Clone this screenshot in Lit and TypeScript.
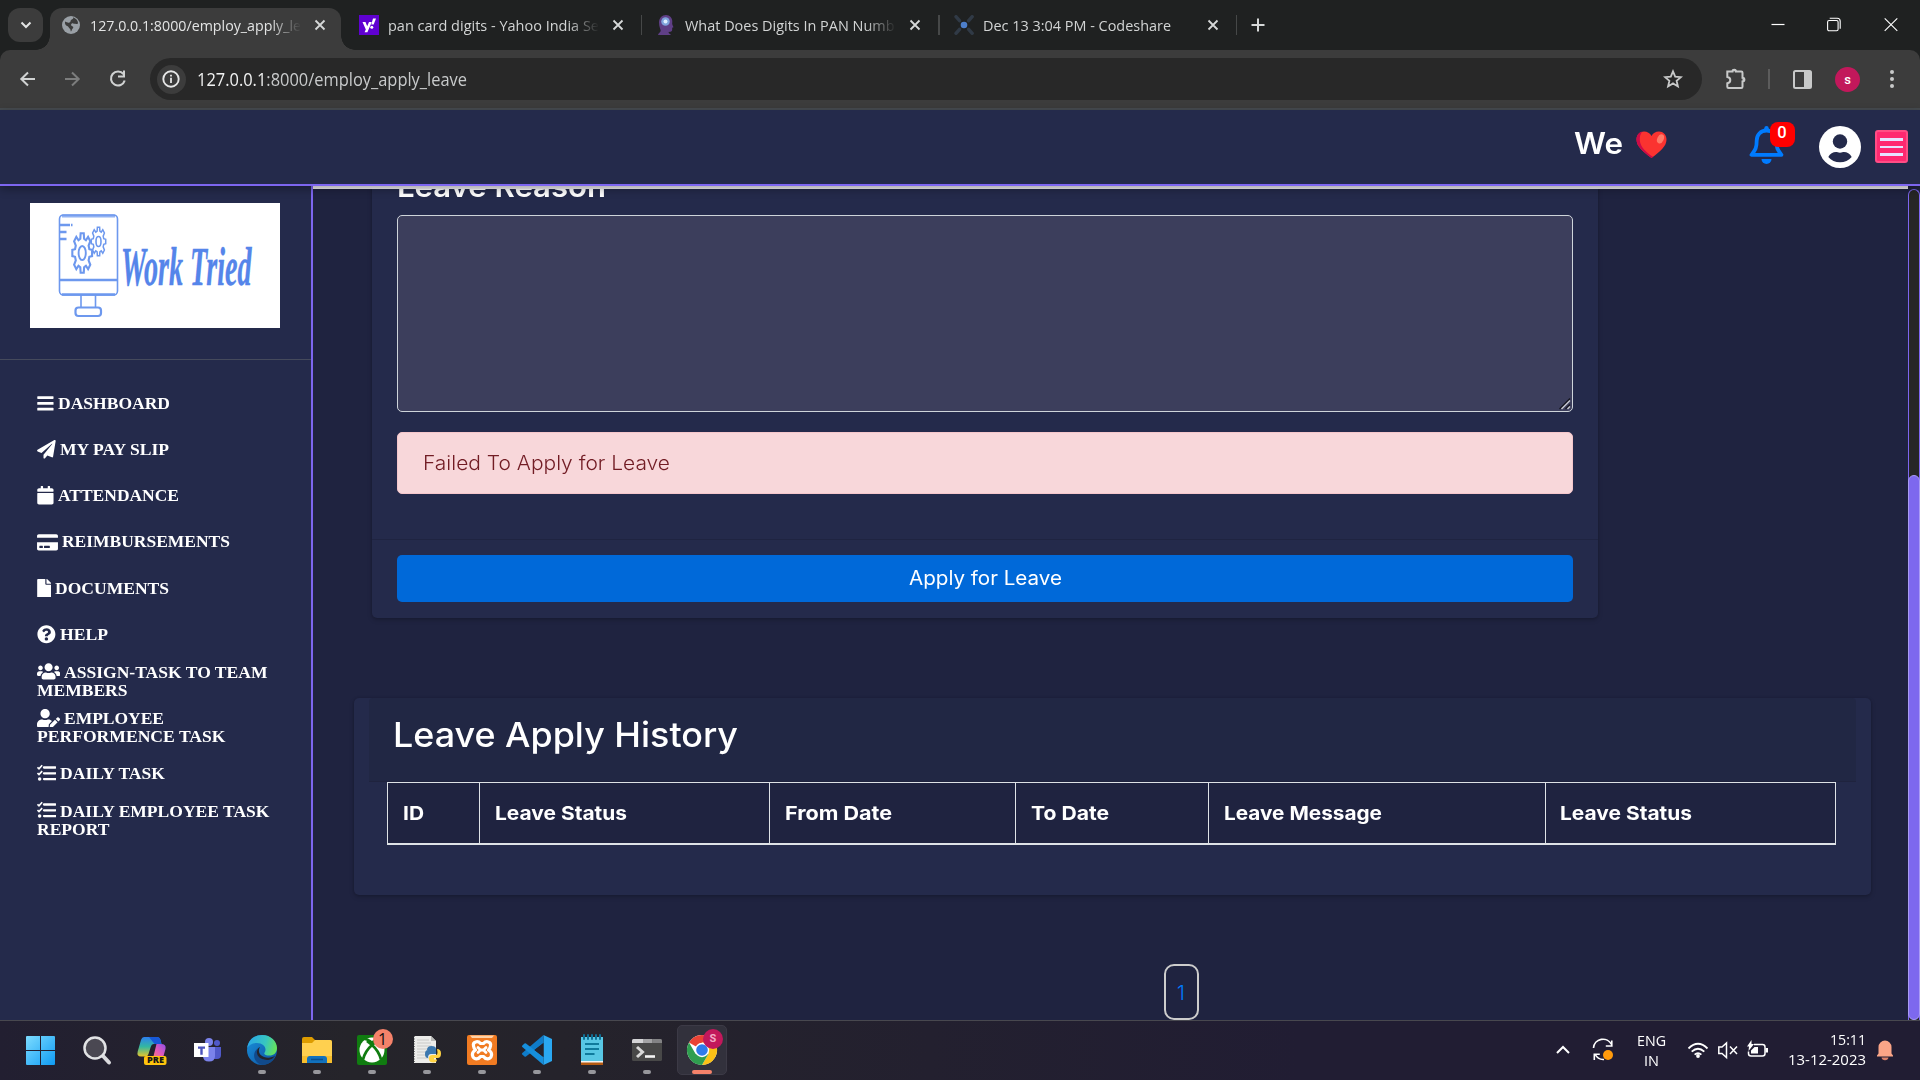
import { LitElement, html, css, svg, nothing } from "lit";
import { customElement, property } from "lit/decorators.js";

/** One line of text, condensed or expanded to the width given by `w`. */
@customElement("fit-text")
class FitText extends LitElement {
  @property({ type: Number }) w = 0;
  static styles = css`
    :host { display: inline-block; white-space: nowrap; vertical-align: top; text-align: left; }
    .inner { display: inline-block; transform-origin: 0 50%; white-space: pre; }
  `;
  render() {
    return html`<span class="inner"><slot></slot></span>`;
  }
  firstUpdated() {
    const inner = this.renderRoot.querySelector(".inner") as HTMLElement;
    const natural = inner.getBoundingClientRect().width;
    if (natural > 0 && this.w > 0) inner.style.transform = `scaleX(${this.w / natural})`;
    this.style.width = `${this.w}px`;
  }
}

const close = html`<svg class="x" width="16" height="16" viewBox="0 0 16 16"><path d="M3.5 3.5l9 9M12.5 3.5l-9 9" stroke="#d6d8d8" stroke-width="1.8" fill="none"/></svg>`;

const favicons = {
  globe: html`<svg width="20" height="20" viewBox="0 0 20 20"><circle cx="9" cy="10" r="9" fill="#9aa0a6"/><path d="M3 6.5c2 .8 2.800 1.500 4.500 1 1.300-.4.8-1.500 1.500-2.500 1-.9 2.500-.6 2.300-2.700 3 1.200 4.700 3.700 4.800 6.200-1.300 1.100-2.300-.2-3.600.3-1.300.4-1.200-1-2.700-.2-1.200.7-.9 2.200.5 2.700 1.500.4 1.200 1.800.2 2.400-1 .8-.5 2-1.600 2.900-.5-.7 0-2-1-2.800-1.300-1-1.200-2.200-2.700-2.700C3.700 10.500 2.600 9 3 6.500z" fill="#3c3c3c"/></svg>`,
  yahoo: html`<svg width="20" height="20" viewBox="0 0 20 20"><rect width="20" height="20" fill="#5f01d1"/><path d="M3.500 7h3l1.700 4.200L10 7h2.800l-4.400 10.200H5.600l1.200-2.700z" fill="#fff"/><path d="M14 3.500h3l-2.300 6h-2.400z" fill="#fff"/><circle cx="12.800" cy="12.300" r="1.500" fill="#fff"/></svg>`,
  head: html`<svg width="20" height="20" viewBox="0 0 20 20"><path d="M1 20c.2-2 2.800-2.500 2.700-4.500C3.500 14 2 11.500 2 7.500 2 3 5 0 9 0s6.300 3 6.300 6.500c0 1.700-.3 2 .2 3.500l1 2.200-1.300.6c0 2 .2 3.700-1.700 3.900l-2 .2c.2 1.600 1.700 1.700 2.500 3.100z" fill="#5f3f86"/><circle cx="8.500" cy="6.500" r="4.300" fill="#7fa3dc"/><circle cx="8.500" cy="6.500" r="2" fill="#dff0ff"/></svg>`,
  share: html`<svg width="22" height="20" viewBox="0 0 22 20"><g stroke="#303a46" stroke-width="3.400" stroke-linecap="round"><path d="M2 1.700l3.500 4M18.200 1.700l-3.500 4M2 18.300l3.500-4M18.200 18.300l-3.500-4"/></g><circle cx="10" cy="10" r="3.300" fill="#4d7fcb"/></svg>`,
};

interface Tab { icon: keyof typeof favicons; title: string; w: number; fade: boolean; active?: boolean; }
const tabs: Tab[] = [
  { icon: "globe", title: "127.0.0.1:8000/employ_apply_le", w: 211, fade: true, active: true },
  { icon: "yahoo", title: "pan card digits - Yahoo India Se", w: 211, fade: true },
  { icon: "head", title: "What Does Digits In PAN Numb", w: 209.5, fade: true },
  { icon: "share", title: "Dec 13 3:04 PM - Codeshare", w: 188, fade: false },
];

const fa = (w: number, vw: number, d: unknown) =>
  html`<svg class="fa" width=${w} height="18.600" viewBox="0 0 ${vw} 512" fill="#fff">${d}</svg>`;

const tasksGlyph = svg`<g stroke="#fff" fill="none"><path d="M10 90l42 42 88-96M10 250l42 42 88-96" stroke-width="46"/><path d="M190 96h312M190 256h312M190 416h312" stroke-width="64" stroke-linecap="round"/></g><circle cx="70" cy="416" r="48"/>`;

interface Item { icon: unknown; first: [string, number]; second?: [string, number]; }
const items: Item[] = [
  { icon: fa(16.8, 448, svg`<rect y="60" width="448" height="76" rx="16"/><rect y="220" width="448" height="76" rx="16"/><rect y="380" width="448" height="76" rx="16"/>`), first: ["DASHBOARD", 112] },
  { icon: fa(18.8, 512, svg`<path d="M476 3.200L12.500 270.600c-18.100 10.400-15.800 35.600 2.200 43.200L121 358.400l287.300-253.200c5.500-4.900 13.300 2.600 8.600 8.300L176 407v80.500c0 23.600 28.500 32.900 42.500 15.800L282 426l124.600 52.200c14.200 6 30.400-2.900 33-18.200l72-432C515 7.800 493.300-6.800 476 3.200z"/>`), first: ["MY PAY SLIP", 109] },
  { icon: fa(16.8, 448, svg`<path d="M12 192h424c6.600 0 12 5.400 12 12v260c0 26.500-21.500 48-48 48H48c-26.500 0-48-21.500-48-48V204c0-6.600 5.400-12 12-12zm436-44v-36c0-26.500-21.500-48-48-48h-48V12c0-6.600-5.400-12-12-12h-40c-6.600 0-12 5.400-12 12v52H160V12c0-6.600-5.400-12-12-12h-40c-6.600 0-12 5.400-12 12v52H48C21.500 64 0 85.500 0 112v36c0 6.600 5.400 12 12 12h424c6.600 0 12-5.400 12-12z"/>`), first: ["ATTENDANCE", 121] },
  { icon: fa(21, 576, svg`<path fill-rule="evenodd" d="M0 432c0 26.500 21.500 48 48 48h480c26.500 0 48-21.500 48-48V256H0v176zm192-68c0-6.600 5.400-12 12-12h136c6.600 0 12 5.400 12 12v40c0 6.600-5.400 12-12 12H204c-6.600 0-12-5.400-12-12v-40zm-128 0c0-6.600 5.400-12 12-12h72c6.600 0 12 5.400 12 12v40c0 6.600-5.400 12-12 12H76c-6.600 0-12-5.400-12-12v-40zM576 80v48H0V80c0-26.500 21.500-48 48-48h480c26.500 0 48 21.500 48 48z"/>`), first: ["REIMBURSEMENTS", 168] },
  { icon: fa(14.3, 384, svg`<path d="M224 136V0H24C10.700 0 0 10.700 0 24v464c0 13.300 10.700 24 24 24h336c13.300 0 24-10.700 24-24V160H248c-13.200 0-24-10.800-24-24zm160-14.100v6.100H256V0h6.100c6.400 0 12.500 2.500 17 7l97.900 98c4.500 4.500 7 10.600 7 16.900z"/>`), first: ["DOCUMENTS", 114] },
  { icon: fa(18.8, 512, svg`<path fill-rule="evenodd" d="M504 256c0 136.997-111.043 248-248 248S8 392.997 8 256C8 119.083 119.043 8 256 8s248 111.083 248 248zM262.655 90c-54.497 0-89.255 22.957-116.549 63.758-3.536 5.286-2.353 12.415 2.715 16.258l34.699 26.310c5.205 3.947 12.621 3.008 16.665-2.122 17.864-22.658 30.113-35.797 57.303-35.797 20.429 0 45.698 13.148 45.698 32.958 0 14.976-12.363 22.667-32.534 33.976C247.128 238.528 216 254.941 216 296v4c0 6.627 5.373 12 12 12h56c6.627 0 12-5.373 12-12v-1.333c0-28.462 83.186-29.647 83.186-106.667 0-58.002-60.165-102-116.531-102zM256 338c-25.365 0-46 20.635-46 46 0 25.364 20.635 46 46 46s46-20.636 46-46c0-25.365-20.635-46-46-46z"/>`), first: ["HELP", 48] },
  { icon: fa(23.2, 640, svg`<path d="M96 224c35.300 0 64-28.700 64-64s-28.700-64-64-64-64 28.700-64 64 28.700 64 64 64zm448 0c35.300 0 64-28.700 64-64s-28.700-64-64-64-64 28.700-64 64 28.700 64 64 64zm32 32h-64c-17.600 0-33.500 7.100-45.100 18.600 40.300 22.100 68.900 62 75.100 109.400h66c17.700 0 32-14.300 32-32v-32c0-35.300-28.700-64-64-64zm-256 0c61.900 0 112-50.100 112-112S381.900 32 320 32 208 82.100 208 144s50.100 112 112 112zm76.800 32h-8.300c-20.800 10-43.900 16-68.500 16s-47.600-6-68.500-16h-8.300C179.600 288 128 339.600 128 403.200V432c0 26.500 21.500 48 48 48h288c26.500 0 48-21.500 48-48v-28.800c0-63.600-51.600-115.200-115.200-115.200zm-223.700-13.400C161.500 263.100 145.600 256 128 256H64c-35.300 0-64 28.700-64 64v32c0 17.700 14.300 32 32 32h65.900c6.300-47.400 34.900-87.300 75.200-109.400z"/>`), first: ["ASSIGN-TASK TO TEAM", 203.5], second: ["MEMBERS", 90.5] },
  { icon: fa(23.2, 640, svg`<path d="M224 256c70.700 0 128-57.300 128-128S294.700 0 224 0 96 57.300 96 128s57.300 128 128 128zm89.600 32h-16.700c-22.200 10.200-46.900 16-72.900 16s-50.600-5.800-72.900-16h-16.700C60.200 288 0 348.200 0 422.400V464c0 26.500 21.500 48 48 48h274.900c-2.400-6.800-3.400-14-2.600-21.300l6.800-60.900 1.200-11.100 7.900-7.900 77.300-77.300c-24.500-27.700-60-45.500-99.900-45.500zm45.300 145.300l-6.800 61c-1.100 10.200 7.500 18.800 17.600 17.600l60.900-6.800 137.900-137.900-71.700-71.700-137.900 137.800zM633 268.900L595.100 231c-9.300-9.300-24.500-9.300-33.800 0l-37.800 37.800-4.100 4.100 71.800 71.700 41.800-41.800c9.300-9.400 9.300-24.500 0-33.900z"/>`), first: ["EMPLOYEE", 100], second: ["PERFORMENCE TASK", 188.5] },
  { icon: fa(18.8, 512, tasksGlyph), first: ["DAILY TASK", 105] },
  { icon: fa(18.8, 512, tasksGlyph), first: ["DAILY EMPLOYEE TASK", 209.5], second: ["REPORT", 72.5] },
];

/** Outline of a gear with square-ish teeth, centred on cx,cy. */
function gear(cx: number, cy: number, rx: number, ry: number): string {
  const pts: string[] = [];
  const teeth = 8;
  for (let i = 0; i < teeth; i++) {
    for (const [o, k] of [[-0.33, 0.74], [-0.2, 1], [0.2, 1], [0.33, 0.74]]) {
      const a = ((i + o) / teeth) * Math.PI * 2 - Math.PI / 2;
      pts.push(`${(cx + Math.cos(a) * rx * k).toFixed(2)} ${(cy + Math.sin(a) * ry * k).toFixed(2)}`);
    }
  }
  return `M${pts.join("L")}Z`;
}

const logo = html`<svg class="logo" width="250" height="125" viewBox="0 0 250 125">
  <rect width="250" height="125" fill="#fff"/>
  <g fill="none" stroke="#6d98ee" stroke-width="1.600">
    <rect x="29.500" y="12" width="58" height="80" rx="4"/>
    <path d="M32 13h53" stroke-width="3" opacity=".75"/><path d="M32 91.500h53" stroke-width="2.600"/>
    <path d="M30 77h57" stroke-width="2.600"/>
    <path d="M30 22h10M41 22h1.500M30 29h6.500M30 36h6.500" stroke-width="2.400"/>
    <path d="M51 92v13M65.500 92v13"/>
    <rect x="45.500" y="104.500" width="25.500" height="8.500" rx="3" stroke-width="2.200"/>
    <path d="${gear(52.2, 50, 10, 20)}" stroke-width="2.100"/><ellipse cx="52.200" cy="50" rx="3.600" ry="7" stroke-width="1.900"/>
    <path d="${gear(68.500, 38.500, 7.300, 14.500)}" stroke-width="1.500"/><ellipse cx="68.500" cy="38.500" rx="2.500" ry="5"/>
  </g>
  <text class="brand" x="91" y="82" textLength="130.500" lengthAdjust="spacingAndGlyphs">Work Tried</text>
</svg>`;

const columns: [string, number][] = [
  ["ID", 20], ["Leave Status", 131], ["From Date", 106],
  ["To Date", 77], ["Leave Message", 157], ["Leave Status", 131],
];

const ti = (body: unknown, w = 32, h = 32) => html`<svg width=${w} height=${h} viewBox="0 0 ${w} ${h}">${body}</svg>`;

const taskIcons: { art: unknown; run: boolean; on?: boolean }[] = [
  { run: false, art: ti(svg`<defs><linearGradient id="wn" x1="0" y1="0" x2="1" y2="1"><stop offset="0" stop-color="#7ddcff"/><stop offset="1" stop-color="#0f9bf3"/></linearGradient></defs><path fill="url(#wn)" d="M0 3a1 1 0 0 1 1-1H14v14H0zM15 2H28a1 1 0 0 1 1 1V16H15zM0 17H14V31H1a1 1 0 0 1-1-1zM15 17h14V30a1 1 0 0 1-1 1H15z"/>`) },
  { run: false, art: ti(svg`<path d="M22 22l6 6.500" stroke="#d9dadd" stroke-width="4" stroke-linecap="round"/><circle cx="14" cy="14" r="10.500" fill="#4a4852" stroke="#e2e3e5" stroke-width="2.500"/>`) },
  { run: false, art: ti(svg`<defs><linearGradient id="c1" x1="0" y1="0" x2="0" y2="1"><stop offset="0" stop-color="#2d7ff0"/><stop offset=".5" stop-color="#33b8a0"/><stop offset="1" stop-color="#e8c52a"/></linearGradient><linearGradient id="c2" x1="1" y1="0" x2="0" y2="1"><stop offset="0" stop-color="#8f50e8"/><stop offset=".5" stop-color="#e65ab5"/><stop offset="1" stop-color="#ff8b60"/></linearGradient></defs><path d="M8 3h13q2.500 0 3.500 3l1 4h-8q-2 0-2.800 3L12.500 20q-.8 2.500-3 2.500H5q-4.500 0-3.300-5L5 6q1-3 3-3z" fill="url(#c1)"/><path d="M13 3h8q2.500 0 3.500 3l1 4h-7z" fill="#1758d8"/><path d="M20.500 10H25q5.500 0 4.500 5l-2 7q-1 4-4 4h-9q2 0 2.800-3z" fill="url(#c2)"/><rect x="8" y="22" width="22.500" height="9" rx="2" fill="#ffc40d"/><text class="pre" x="11" y="29.400" textLength="17" lengthAdjust="spacingAndGlyphs">PRE</text>`) },
  { run: false, art: ti(svg`<circle cx="18" cy="8" r="4" fill="#7b83eb"/><circle cx="26" cy="9" r="3" fill="#5059c9"/><path d="M22 13h8v8q0 4-4 4h-4z" fill="#5059c9"/><path d="M12 13h12v9q0 5.500-6 5.500T12 22z" fill="#7b83eb"/><rect x="3" y="9" width="14.500" height="14" fill="#fff"/><path d="M7 12.500h7v2.200h-2.300v6h-2.400v-6H7z" fill="#4b53bc"/>`) },
  { run: true, art: ti(svg`<defs><linearGradient id="e1" x1="0" y1=".3" x2="1" y2=".5"><stop offset="0" stop-color="#2aa6e8"/><stop offset=".6" stop-color="#37c6c0"/><stop offset="1" stop-color="#66e35a"/></linearGradient><linearGradient id="e2" x1="0" y1="0" x2="1" y2="1"><stop offset="0" stop-color="#1a92dc"/><stop offset="1" stop-color="#0c4f9e"/></linearGradient></defs><circle cx="16" cy="16" r="15" fill="url(#e2)"/><path d="M1.200 14C2.500 5 9 1 16 1c9 0 15 6.500 15 13 0 5-3.500 7.500-7.500 7.500-3.500 0-5.500-1.200-5.200-2.300.4-1 1.200-1.700 1.200-3.700 0-3.500-3.500-6.500-8.500-6.500C6 9 2.500 11.500 1.200 14z" fill="url(#e1)"/><path d="M11 17c0 6 5 9 10 9 4 0 6.500-1.500 8-3-3 5.500-8 8-13 8-6-1.500-9-7-7.500-12 .8-2.500 2-4 4.500-5-1.500 1-2 2-2 3z" fill="#114a8b"/><path d="M14 13c-2 3-1.500 8 4 10 4 1.500 9 .5 11-1.500-1 2.500-4 4.500-8 4.500-6 0-11-4-10-9 .3-2 1.500-3.500 3-4z" fill="#24242c"/>`) },
  { run: true, art: ti(svg`<path d="M1 5q0-2 2-2h8l3 3h15q2 0 2 2v4H1z" fill="#dd9c00"/><path d="M1 9h10l3-3h15q2 0 2 2v21H1z" fill="#ffd04f"/><path d="M1 22h30v7H1z" fill="#f7be2d"/><path d="M6 29v-4q0-3 3-3h14q3 0 3 3v4z" fill="#1272bd"/><path d="M10 25.500h12" stroke="#0a4f8e" stroke-width="1.500"/>`) },
  { run: true, art: html`${ti(svg`<rect x="1" y="1" width="30" height="30" rx="2" fill="#107c10"/><circle cx="16" cy="16" r="12.500" fill="#fff"/><path d="M8 4.800Q12 5 16 8.700 20 5 24 4.800" fill="none" stroke="#107c10" stroke-width="2.600"/><path d="M7 25.500C8.500 19.500 12 14.500 16 11M25 25.500C23.500 19.500 20 14.500 16 11M16 11L11 7M16 11l5-4" fill="none" stroke="#107c10" stroke-width="2.800"/>`)}<span class="badge one">1</span>` },
  { run: true, art: ti(svg`<path d="M3 2h17l5 5v22H3z" fill="#ececea"/><path d="M20 2l5 5h-5z" fill="#b9bab8"/><path d="M6 6h12M6 9h14M6 12h15M6 15h12M6 18h10M6 21h10M6 24h12" stroke="#c9cac8" stroke-width="1.200"/><path d="M3.500 2v27" stroke="#777" stroke-dasharray="1 1.500"/><path d="M16 16q0-4 4.500-4t4.500 3v5h-5q-3 0-3 4-3 0-3-4t3-4h4.500" fill="#3b77ae"/><path d="M26 15q4 0 4 4.500t-3.500 4.500H23v1.500h3q0 3-3.500 3T18 26v-2q0-3 3.500-3H25q1.500 0 1.500-3z" fill="#ffd445"/>`) },
  { run: true, art: ti(svg`<rect x="1" y="1" width="30" height="30" rx="2" fill="#f17b22"/><path d="M4 1.500h24l-2 2.500H6z" fill="#ffd3a8"/><path d="M7.500 12C6.500 7.500 12 6.500 14.500 9.500H17.500C20 6.500 25.500 7.500 24.500 12 24.300 13.500 23.500 15 22.500 16 25 17.500 26 19.500 25.500 21.500 24.500 26 19.500 25.500 17.500 22.500H14.500C12.500 25.500 7.500 26 6.500 21.500 6 19.500 7 17.500 9.500 16 8.500 15 7.700 13.500 7.500 12z" fill="none" stroke="#fff" stroke-width="3.200" stroke-linejoin="round"/><path d="M12 13.500l2.500 2.500-2.500 2.500M20 13.500L17.500 16l2.500 2.500M14.500 16h3" fill="none" stroke="#fff" stroke-width="2.800" stroke-linecap="round"/>`) },
  { run: true, art: ti(svg`<path d="M22.500 1L31 5v22l-8.500 4z" fill="#2aa8f2"/><path d="M22.500 1v8L5 22.500q-.8.600-1.500 0L1.300 20.500q-.8-.8 0-1.600z" fill="#0f7cc9"/><path d="M22.500 31v-8L5 9.500q-.8-.600-1.500 0L1.300 11.500q-.8.8 0 1.600z" fill="#168fdc"/><path d="M22.500 9L13.500 16l9 7z" fill="#25242d"/>`) },
  { run: true, art: ti(svg`<path d="M5 3h22v25H5z" fill="#58c7e4"/><path d="M5 27h22v4H5z" fill="#b45a12"/><path d="M5 27h22v1.500H5z" fill="#f4f4f4"/><path d="M8 1v4M12 1v4M16 1v4M20 1v4M24 1v4" stroke="#0f6f95" stroke-width="2" stroke-linecap="round"/><path d="M9 10h14M9 15h14M9 20h9.500" stroke="#0f7a9c" stroke-width="2"/>`) },
  { run: true, art: ti(svg`<rect x="1" y="5" width="30" height="22" rx="1.500" fill="#484848"/><path d="M1 9V6.500Q1 5 2.500 5H12v4z" fill="#d4d4d6"/><path d="M12 5h9.500v4H12z" fill="#a4a4a6"/><path d="M21.500 5h8Q31 5 31 6.500V9h-9.500z" fill="#838385"/><path d="M6 13l5.500 5L6 23" stroke="#d9d9d9" stroke-width="3" fill="none"/><path d="M14 22.500h10" stroke="#f4f4f4" stroke-width="2.600"/>`) },
  { run: true, on: true, art: html`${ti(svg`<circle cx="16" cy="16" r="15" fill="#fff"/><path d="M16 16L3 8.500A15 15 0 0 1 29 8.500H16z" fill="#ea4335"/><path d="M29 8.500A15 15 0 0 1 16 31l6.500-11.250L16 8.500z" fill="#fbc116"/><path d="M3 8.500A15 15 0 0 0 16 31l6.500-11.250-13 0z" fill="#2f9e4f"/><circle cx="16" cy="16" r="7.200" fill="#fff"/><circle cx="16" cy="16" r="5.800" fill="#2f7bea"/>`)}<span class="badge ess">S</span>` },
];

@customElement("app-root")
class AppRoot extends LitElement {
  static styles = css`
    :host { display: block; width: 1920px; height: 1080px; overflow: hidden; }
    * { box-sizing: border-box; }
    svg { display: block; flex: none; }
    .screen { display: flex; flex-direction: column; width: 1920px; height: 1080px; background: #1f2340; font-family: "Open Sans", "Noto Sans", sans-serif; }

    .strip { display: flex; height: 50px; background: #1f2121; padding-left: 8px; flex: none; }
    .search-tabs { width: 35px; height: 34px; margin: 8px 6.500px 0 0; border-radius: 12px; background: #3c3c3c; display: grid; place-items: center; }
    .tab { position: relative; display: flex; align-items: center; width: 297.5px; height: 50px; padding-left: 12px; color: #d2d4d4; font-size: 14.800px; line-height: 20px; }
    .tab > * { position: relative; }
    .shape { position: absolute; left: 0; top: 8px; width: 291px; height: 42px; border-radius: 12px 12px 0 0; background: #3c3c3c; }
    .shape::before, .shape::after { content: ""; position: absolute; bottom: 0; width: 14px; height: 14px; }
    .shape::before { left: -14px; background: radial-gradient(circle at 0 0, transparent 13.500px, #3c3c3c 14px); }
    .shape::after { right: -14px; background: radial-gradient(circle at 100% 0, transparent 13.500px, #3c3c3c 14px); }
    .icon { width: 20px; }
    .label { width: 211px; margin-left: 8.500px; height: 20px; overflow: hidden; }
    .fade { -webkit-mask-image: linear-gradient(90deg, #000 180px, transparent 211px); mask-image: linear-gradient(90deg, #000 180px, transparent 211px); }
    .active { color: #e3e4e4; }
    .x { margin-left: 11px; }
    .sep { width: 1.500px; height: 20px; margin-left: 15px; background: #464848; }
    .plus { margin: 17px 0 0 10.500px; }
    .win { display: flex; margin-left: auto; }
    .win svg { margin-top: 17px; }
    .win .b { margin-left: 42px; } .win .c { margin: 17px 22px 0 43px; }

    .toolbar { position: relative; display: flex; align-items: center; height: 60px; background: #3c3c3c; border-bottom: 2px solid #464b50; flex: none; border-radius: 10px 10px 0 0; }
    .bar-wrap { background: #1f2121; flex: none; }
    .nav { display: flex; padding-left: 17.500px; gap: 25px; width: 150px; }
    .omni { display: flex; align-items: center; width: 1552px; height: 42px; border-radius: 21px; background: #282828; padding: 0 19.500px 0 6.500px; color: #c8cacb; font-size: 17.800px; line-height: 26px; }
    .info { width: 29px; height: 29px; border-radius: 50%; background: #3c3c3c; display: grid; place-items: center; margin-right: 11px; }
    .omni .star { margin-left: auto; }
    .host { color: #f1f2f2; }
    .ext { margin-left: 23px; }
    .tsep { width: 2px; height: 20px; background: #5c5c5c; margin-left: 21px; }
    .panel { margin-left: 23px; }
    .ava { width: 25px; height: 25px; border-radius: 50%; background: #c2185b; color: #fff; font: 500 13px/25px Roboto, sans-serif; text-align: center; margin-left: 23px; }
    .dots { margin-left: 29px; }

    .site-head { position: relative; z-index: 2; display: flex; height: 76px; background: #242a4b; border-bottom: 2px solid #7d66f0; box-shadow: 0 3px 9px rgba(0, 0, 0, .32); flex: none; }
    .we { margin: 13px 0 0 1573.500px; color: #fff; font: 600 29.500px/40px Inter, sans-serif; width: 62px; }
    .heart { margin-top: 20px; }
    .bell { position: relative; margin: 16px 0 0 82px; width: 36px; height: 40px; }
    .zero { position: absolute; left: 21px; top: -4px; width: 25px; height: 25px; border-radius: 8px; background: #f00; color: #fff; font: 500 16.500px/21px Roboto, sans-serif; text-align: center; }
    .user { margin: 15.500px 0 0 34.500px; }
    .burger { width: 33px; height: 33px; margin: 20px 0 0 14px; border: 2px solid #ff4d85; border-radius: 3px; background: #ff2870; display: flex; flex-direction: column; align-items: center; justify-content: space-between; padding: 6px 0 5.500px; }
    .burger i { width: 23px; height: 2.500px; background: #e6e2ff; }

    .body { display: flex; height: 834px; flex: none; overflow: hidden; }
    .side { width: 313px; border-right: 2px solid #7d66f0; background: #242a4b; display: flex; flex-direction: column; flex: none; }
    .logo { margin: 17px 0 31px 30px; overflow: visible; }
    .brand { font: italic 700 54px "Liberation Serif", serif; fill: #5585ea; stroke: #5585ea; stroke-width: .4px; }
    .menu { border-top: 1px solid #454a5c; padding: 20.500px 0 0 37px; color: #fff; font: 700 17.700px/18px "Liberation Serif", serif; }
    .item { display: flex; flex-direction: column; justify-content: center; height: 46.250px; }
    .line { display: flex; align-items: center; height: 18px; }
    .line:only-child fit-text { margin-top: -2px; }
    .fa { margin-right: 4px; margin-top: -1px; }
    .main { width: 1595px; flex: none; border-top: 3px solid #f1eff3; overflow: hidden; font-family: Inter, sans-serif; color: #fff; display: flex; flex-direction: column; }
    .card { background: #242a4b; box-shadow: 0 2px 5px rgba(0, 0, 0, .2), 0 0 2px rgba(0, 0, 0, .16); flex: none; border-radius: 5px; }
    .form { width: 1226.500px; margin-left: 58.500px; margin-top: -30px; padding-top: 9px; height: 458.500px; }
    .fields { padding: 0 25px 0 25.500px; height: 371px; }
    .lbl { font: 600 29.500px/36px Inter, sans-serif; height: 36px; margin: 0 0 11px 0; }
    .area { display: flex; align-items: flex-end; justify-content: flex-end; height: 197px; border: 1px solid #ced4da; border-radius: 5px; background: #3c3e5c; padding: 1px; }
    .alert { margin-top: 20px; height: 62px; border: 1px solid #f5c6cb; border-radius: 5px; background: #f8d7da; color: #721c24; font: 300 19.500px/60px Inter, sans-serif; padding-left: 24.500px; }
    .foot { border-top: 1px solid #1f2441; padding: 15px 25px 0 25.500px; }
    .btn { display: block; width: 100%; height: 47px; border: 0; border-radius: 5px; background: #0069d9; color: #fff; font: 400 19.500px/45px Inter, sans-serif; text-align: center; padding: 0; }
    .hist { width: 1517px; height: 197px; margin: 80.500px 0 0 40.500px; }
    .hhead { height: 83.500px; margin: 0 15px; background: #212744; border-bottom: 1px solid #1f233e; border-radius: 4px 4px 0 0; padding: 15.500px 0 0 24.500px; font: 500 34.500px/42px Inter, sans-serif; }
    .table { display: grid; margin-left: 33.500px; width: 1449px; height: 63px; border: 1px solid #dee2e6; border-bottom-width: 2px; background: #1f2340; grid-template-columns: 92px 290px 246px 193px 337px 289px; font: 700 19px/61px Inter, sans-serif; }
    .th { padding-left: 14.500px; border-right: 1px solid #dee2e6; }
    .th:last-child { border-right: 0; padding-left: 13.500px; }
    .page { width: 35px; height: 56px; margin: 68.500px 0 0 850.500px; border: 2px solid #ccc; border-radius: 10px; color: #007bff; font: 300 20px/54px Inter, sans-serif; text-align: center; }
    .scroll { width: 12px; flex: none; margin-top: 3px; border: 1px solid #7d66f0; border-bottom: 0; border-radius: 6px 6px 0 0; background: #262626; display: flex; flex-direction: column; justify-content: flex-end; }
    .thumb { margin: 0 -1px; height: 545px; background: #7d68ee; border: 1px solid #a99bf5; border-radius: 6px; }

    .task { display: flex; height: 60px; background: linear-gradient(90deg, #221f31 0, #25242a 350px, #25232b 560px, #211d33 1300px, #211d33 100%); border-top: 1px solid #48484f; padding-left: 14.500px; flex: none; color: #fff; }
    .app { position: relative; display: flex; flex-direction: column; align-items: center; width: 55px; padding-top: 13px; }
    .app svg { position: relative; }
    .mark { width: 8px; height: 4px; border-radius: 2px; background: #97979c; margin-top: 4px; position: relative; }
    .on .mark { width: 20px; background: #f5826a; }
    .hl { position: absolute; left: 2.500px; top: 4px; width: 50px; height: 50px; border: 1px solid #3c3a46; border-radius: 5px; background: #32313c; }
    .badge { position: absolute; border-radius: 50%; width: 20px; height: 20px; text-align: center; z-index: 1; }
    .one { left: 28px; top: 8px; background: #f5826a; color: #111; font: 16px/20px "Open Sans", sans-serif; }
    .ess { left: 28.500px; top: 8px; background: #c2185b; color: #f3a8c4; font: 700 11px/20px Roboto, sans-serif; }
    .pre { font: 800 8px "Open Sans", sans-serif; fill: #161616; }
    .tray { display: flex; margin-left: auto; font-size: 14.800px; line-height: 20px; }
    .lang { display: flex; flex-direction: column; align-items: center; width: 30px; padding-top: 9px; }
    .clock { display: flex; flex-direction: column; align-items: flex-end; margin-left: 20px; width: 78px; padding-top: 8px; }
  `;

  render() {
    return html`<div class="screen">
      <div class="strip">
        <div class="search-tabs"><svg width="12" height="8" viewBox="0 0 12 8"><path d="M1.500 1.500L6 6l4.500-4.500" stroke="#e3e4e4" stroke-width="2" fill="none"/></svg></div>
        ${tabs.map((t) => html`<div class="tab ${t.active ? "active" : ""}">
          ${t.active ? html`<div class="shape"></div>` : nothing}
          <div class="icon">${favicons[t.icon]}</div>
          <div class="label ${t.fade ? "fade" : ""}"><fit-text .w=${t.w}>${t.title}</fit-text></div>
          ${close}${t.active ? nothing : html`<div class="sep"></div>`}
        </div>`)}
        <svg class="plus" width="16" height="16" viewBox="0 0 16 16"><path d="M8 1.500v13M1.500 8h13" stroke="#d6d8d8" stroke-width="2"/></svg>
        <div class="win">
          <svg width="14" height="16" viewBox="0 0 14 16"><path d="M.500 7.500h13" stroke="#fff" stroke-width="1.200"/></svg>
          <svg class="b" width="14" height="16" viewBox="0 0 14 16"><g fill="none" stroke="#fff" stroke-width="1.100"><rect x=".600" y="3.500" width="10.500" height="10.300" rx="1.500"/><path d="M2.700 1.300h7.500q3 0 3 3v7.500"/></g></svg>
          <svg class="c" width="14" height="16" viewBox="0 0 14 16"><path d="M.700 1.300l12.600 12.600M13.300 1.300L.700 13.900" stroke="#fff" stroke-width="1.100"/></svg>
        </div>
      </div>
      <div class="bar-wrap"><div class="toolbar">
        <div class="nav">
          <svg width="20" height="20" viewBox="0 0 20 20"><path d="M17 10H3.500M10 3.500L3.300 10l6.700 6.500" stroke="#d0d2d2" stroke-width="2" fill="none"/></svg>
          <svg width="20" height="20" viewBox="0 0 20 20"><path d="M2 10h13.500M9 3.500l6.700 6.500L9 16.500" stroke="#7c7d7d" stroke-width="2" fill="none"/></svg>
          <svg width="20" height="20" viewBox="0 0 20 20"><path d="M15.500 5.200A7 7 0 1 0 16.700 11.500" stroke="#d0d2d2" stroke-width="2.100" fill="none"/><path d="M17 1.500v7h-7V6.500h5V1.500z" fill="#d0d2d2"/></svg>
        </div>
        <div class="omni">
          <div class="info"><svg width="18" height="18" viewBox="0 0 18 18"><circle cx="9" cy="9" r="7.700" fill="none" stroke="#e6e7e7" stroke-width="1.900"/><path d="M8.100 7.800h1.800v5.200H8.100zM8.100 4.800h1.800v1.800H8.100z" fill="#e6e7e7"/></svg></div>
          <fit-text .w=${270}><span class="host">127.0.0.1</span>:8000/employ_apply_leave</fit-text>
          <svg class="star" width="20" height="20" viewBox="0 0 20 20"><path d="M10 2.300l2.200 5.300 5.700.5-4.300 3.700 1.300 5.600L10 14.400l-4.900 3 1.300-5.600-4.300-3.700 5.700-.5z" fill="none" stroke="#c8c9c9" stroke-width="1.800"/></svg>
        </div>
        <svg class="ext" width="22" height="22" viewBox="0 0 22 22"><path d="M2.300 3.500h5.200a1.700 1.700 0 0 1 3.400 0h5.400q1.200 0 1.200 1.200v5a1.900 1.900 0 0 1 0 3.800v5.200q0 1.300-1.200 1.300H3.500q-1.200 0-1.200-1.300v-3.400q3-.4 3-3.200t-3-3.200z" fill="none" stroke="#c8c9c9" stroke-width="2"/><path d="M7 3.300a2.300 2.300 0 0 1 4.600 0zM17.500 9.300a2.300 2.300 0 0 1 0 4.600z" fill="#c8c9c9"/></svg>
        <div class="tsep"></div>
        <svg class="panel" width="19" height="19" viewBox="0 0 19 19"><rect x="1" y="1" width="17" height="17" rx="1.500" fill="none" stroke="#c8c9c9" stroke-width="2"/><path d="M11 1h7v17h-7z" fill="#c8c9c9"/></svg>
        <div class="ava">s</div>
        <svg class="dots" width="6" height="20" viewBox="0 0 6 20"><g fill="#c8c9c9"><circle cx="3" cy="3" r="2"/><circle cx="3" cy="10" r="2"/><circle cx="3" cy="17" r="2"/></g></svg>
      </div></div>

      <div class="site-head">
        <div class="we"><fit-text .w=${49}>We</fit-text></div>
        <svg class="heart" width="31" height="29" viewBox="0 0 31 29"><path d="M15.500 28C6 21 .500 16 .500 9.500.500 4.500 4 1.500 8 1.500c3.300 0 6 1.700 7.500 4.500C17 3.200 19.500 1.500 23 1.500c4 0 7.500 3 7.500 8C30.500 16 25 21 15.500 28z" fill="#fb3330"/><path d="M15.500 28C6 21 .500 16 .500 9.500.500 5.500 3 2.300 6 1.800 2.500 6.500 3 14 8 19.500c3 3.500 6 5.500 9 7.300z" fill="#cc0a48"/><ellipse cx="24.500" cy="8.800" rx="3.200" ry="4.800" transform="rotate(25 24.500 8.800)" fill="#ff7a68"/></svg>
        <div class="bell">
          <svg width="36" height="40" viewBox="0 0 36 40"><path d="M17.500 4.500C11.500 4.500 7.700 9 7.700 14.500c0 8-1.500 9.500-5.200 14.300h30c-3.700-4.800-5.200-6.300-5.200-14.300 0-5.500-3.800-10-9.800-10z" fill="none" stroke="#007bff" stroke-width="3.800" stroke-linejoin="round"/><path d="M15.300 4V2.200a2.200 2.200 0 0 1 4.400 0V4z" fill="#007bff"/><path d="M12.500 33h10a5 5 0 0 1-10 0z" fill="#007bff"/></svg>
          <span class="zero">0</span>
        </div>
        <svg class="user" width="42" height="42" viewBox="0 0 42 42"><circle cx="21" cy="21" r="21" fill="#fff"/><circle cx="21" cy="15.500" r="7.200" fill="#242a4b"/><path d="M9.300 31c1.700-3.500 4.700-5 7.700-5 1.300 0 2 .7 4 .7s2.700-.7 4-.7c3 0 6 1.500 7.700 5-3 3.300-7 5.300-11.700 5.300S12.300 34.300 9.300 31z" fill="#242a4b"/></svg>
        <div class="burger"><i></i><i></i><i></i></div>
      </div>

      <div class="body">
        <div class="side">
          ${logo}
          <div class="menu">${items.map((i) => html`<div class="item">
            <div class="line">${i.icon}<fit-text .w=${i.first[1]}>${i.first[0]}</fit-text></div>
            ${i.second ? html`<div class="line"><fit-text .w=${i.second[1]}>${i.second[0]}</fit-text></div>` : nothing}
          </div>`)}</div>
        </div>
        <div class="main">
          <div class="card form">
            <div class="fields">
              <div class="lbl"><fit-text .w=${209}>Leave Reason</fit-text></div>
              <div class="area"><svg width="12" height="12" viewBox="0 0 12 12"><path d="M.500 11L11 .500M6.500 11L11 6.500" stroke="#15151f" stroke-width="1.300"/><path d="M2.500 11L11 2.500M8.500 11L11 8.500" stroke="#c4c5cc" stroke-width="1.500"/></svg></div>
              <div class="alert"><fit-text .w=${247}>Failed To Apply for Leave</fit-text></div>
            </div>
            <div class="foot"><button class="btn"><fit-text .w=${153}>Apply for Leave</fit-text></button></div>
          </div>
          <div class="card hist">
            <div class="hhead"><fit-text .w=${345}>Leave Apply History</fit-text></div>
            <div class="table">${columns.map(([t, w]) => html`<div class="th"><fit-text .w=${w + 1}>${t}</fit-text></div>`)}</div>
          </div>
          <div class="page">1</div>
        </div>
        <div class="scroll"><div class="thumb"></div></div>
      </div>

      <div class="task">
        ${taskIcons.map((t) => html`<div class="app ${t.on ? "on" : ""}">${t.on ? html`<div class="hl"></div>` : nothing}${t.art}${t.run ? html`<div class="mark"></div>` : nothing}</div>`)}
        <div class="tray">
          <svg width="80" height="59" viewBox="1556 1021 80 59"><path d="M1557 1053l6-6 6 6" stroke="#fff" stroke-width="2" fill="none"/><g fill="none" stroke="#fff" stroke-width="1.600"><path d="M1593.500 1048a9.500 9.500 0 0 1 18-3.500M1611.800 1040.500v5.500h-6M1604 1059.500q-6 .5-9-5.500M1594.300 1060v-5.700h5.500"/></g><circle cx="1608" cy="1055" r="5" fill="#ff9a0c"/></svg>
          <div class="lang"><fit-text .w=${29}>ENG</fit-text><fit-text .w=${15}>IN</fit-text></div>
          <svg width="102" height="59" viewBox="1666 1021 102 59"><g fill="none" stroke="#fff" stroke-width="1.800"><path d="M1688.500 1048.500q9.500-9.500 19 0M1691.700 1051.700q6.300-6 12.600 0M1694.600 1054.700q3.400-3 6.800 0"/></g><circle cx="1698" cy="1056" r="1.900" fill="#fff"/><g fill="none" stroke="#fff" stroke-width="1.500"><path d="M1718.800 1047v6.500h3.200l4.500 4v-14.500l-4.500 4zM1730 1046.500l7 7.500M1737 1046.500l-7 7.500"/><path d="M1754 1044.500h8.500q2.500 0 2.500 2.500v6.500q0 2.500-2.500 2.500h-11.500q-2.500 0-2.500-2.500v-2"/></g><path d="M1751 1053.500v-3l3.500-3.500h3.500v6.500zM1765.500 1048h2.500v4.500h-2.500zM1751.500 1040v4h2.500l-5.500 7 .5-4.500h-2z" fill="#fff"/></svg>
          <div class="clock"><fit-text .w=${36}>15:11</fit-text><fit-text .w=${78}>13-12-2023</fit-text></div>
          <svg width="54" height="59" viewBox="1866 1021 54 59"><path d="M1877 1056.500v-1l1.500-2v-6.500a6.500 6.500 0 0 1 13 0v6.500l1.500 2v1z" fill="#fba587"/><path d="M1881.500 1057.500h7q-.5 2.800-3.500 2.800t-3.500-2.800z" fill="#d9806a"/></svg>
        </div>
      </div>
    </div>`;
  }
}
